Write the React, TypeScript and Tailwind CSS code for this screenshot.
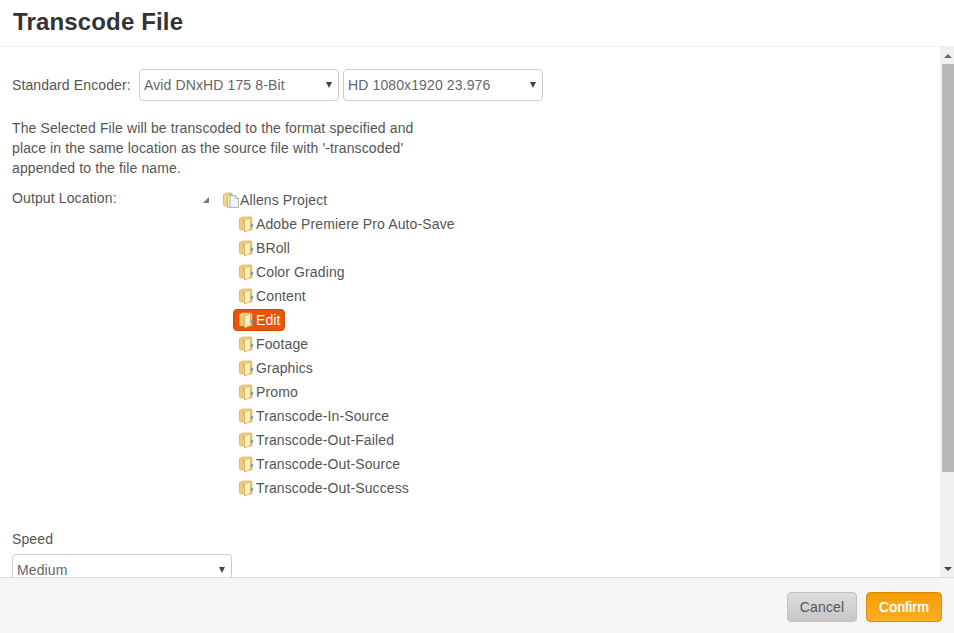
const folders = [
  'Adobe Premiere Pro Auto-Save',
  'BRoll',
  'Color Grading',
  'Content',
  'Edit',
  'Footage',
  'Graphics',
  'Promo',
  'Transcode-In-Source',
  'Transcode-Out-Failed',
  'Transcode-Out-Source',
  'Transcode-Out-Success',
];

function FolderIcon() {
  return (
    <svg width="16" height="17" viewBox="0 0 16 17" className="shrink-0">
      <path d="M1.5 2.5 L4 1 H13 L14 2.5 V14 H2.5 L1.5 13 Z" fill="#f3d488" stroke="#cfae68" strokeWidth="0.7" />
      <path d="M2.5 3 L6.5 2 V13.5 H2.5 Z" fill="#eec56c" />
      <path d="M6.5 4 L12.5 1.8 V13.5 L6.5 16 Z" fill="#fdedbd" stroke="#c9a45a" strokeWidth="0.7" />
      <path d="M13 8 H15 V11 H13 Z" fill="#6f9fc8" />
    </svg>
  );
}

function RootIcon() {
  return (
    <svg width="18" height="17" viewBox="0 0 18 17" className="shrink-0">
      <path d="M1.5 2.5 L4.5 1 H10 V14 H2.5 L1.5 13 Z" fill="#f3d488" stroke="#cfae68" strokeWidth="0.7" />
      <path d="M5.5 3.5 L9 2 V14 L5.5 16 Z" fill="#fdedbd" stroke="#c9a45a" strokeWidth="0.7" />
      <path d="M8 3.5 H13.5 L16.5 6.5 V15.5 H8 Z" fill="#f0f4f7" stroke="#9aa5ad" strokeWidth="0.8" />
      <path d="M13.5 3.5 V6.5 H16.5" fill="#d9e0e5" stroke="#9aa5ad" strokeWidth="0.6" />
    </svg>
  );
}

function Select({ value, width }: { value: string; width: string }) {
  return (
    <div className={`${width} h-8 shrink-0 flex items-center justify-between pl-1 pr-[6px] border border-[#ccc] rounded bg-white text-[#666]`}>
      <span>{value}</span>
      <span className="w-0 h-0 border-x-[3.5px] border-x-transparent border-t-[6px] border-t-[#444]" />
    </div>
  );
}

export default function App() {
  return (
    <div className="w-[954px] h-[633px] flex flex-col bg-white overflow-hidden text-sm tracking-[0.12px] text-[#555] font-['Liberation_Sans',Arial,sans-serif]">
      <div className="h-[47px] shrink-0 border-b border-[#eee] pl-[13px] pt-[6px]">
        <h1 className="text-2xl leading-8 font-bold tracking-[0.15px] text-[#333]">Transcode File</h1>
      </div>

      <div className="flex-1 min-h-0 flex">
        <div className="flex-1 min-w-0 overflow-hidden pl-3 pt-[22px]">
          <div className="flex items-center">
            <span className="w-[127px] shrink-0">Standard Encoder:</span>
            <Select value="Avid DNxHD 175 8-Bit" width="w-[200px]" />
            <span className="w-1 shrink-0" />
            <Select value="HD 1080x1920 23.976" width="w-[200px]" />
          </div>

          <p className="mt-[17px] leading-5 w-[420px]">
            The Selected File will be transcoded to the format specified and
            <br />
            place in the same location as the source file with '-transcoded'
            <br />
            appended to the file name.
          </p>

          <div className="flex mt-[10px]">
            <span className="w-[188px] shrink-0 leading-5">Output Location:</span>
            <div>
              <div className="h-6 flex items-center">
                <span className="w-[22px] shrink-0 pl-[3px]">
                  <span className="block w-0 h-0 border-l-[6px] border-l-transparent border-b-[6px] border-b-[#777]" />
                </span>
                <RootIcon />
                <span>Allens Project</span>
              </div>
              {folders.map((name) => (
                <div key={name} className="h-6 flex items-center pl-[38px]">
                  {name === 'Edit' ? (
                    <span className="h-[22px] -ml-[5px] pl-[4px] pr-[3px] flex items-center gap-[2px] rounded bg-[#e8540a] border border-[#d04a05] text-white">
                      <FolderIcon />
                      <span>{name}</span>
                    </span>
                  ) : (
                    <span className="flex items-center gap-[2px]">
                      <FolderIcon />
                      <span>{name}</span>
                    </span>
                  )}
                </div>
              ))}
            </div>
          </div>

          <div className="mt-[29px] leading-5">Speed</div>
          <div className="mt-[5px]">
            <Select value="Medium" width="w-[220px]" />
          </div>
        </div>

        <div className="w-[14px] shrink-0 bg-[#f1f1f1] flex flex-col">
          <div className="h-[17px] shrink-0 flex items-center justify-center pl-[2px]">
            <span className="w-0 h-0 border-x-[4px] border-x-transparent border-b-[4px] border-b-[#666]" />
          </div>
          <div className="h-[408px] ml-[2px] bg-[#b9b9b9]" />
          <div className="flex-1" />
          <div className="h-[17px] shrink-0 flex items-center justify-center pl-[2px]">
            <span className="w-0 h-0 border-x-[4px] border-x-transparent border-t-[4px] border-t-[#444]" />
          </div>
        </div>
      </div>

      <div className="h-[56px] shrink-0 border-t border-[#ddd] bg-[#f5f5f5] flex items-start justify-end gap-[9px] pt-[14px] pr-[12px]">
        <button className="w-[70px] h-[30px] rounded border border-[#c4c4c4] bg-gradient-to-b from-[#dedede] to-[#c6c6c6] text-[#555]">
          Cancel
        </button>
        <button className="w-[76px] h-[30px] rounded border border-[#d98e04] bg-gradient-to-b from-[#f39c05] to-[#fdae1e] text-white [text-shadow:0_0_1px_#fff]">
          Confirm
        </button>
      </div>
    </div>
  );
}
